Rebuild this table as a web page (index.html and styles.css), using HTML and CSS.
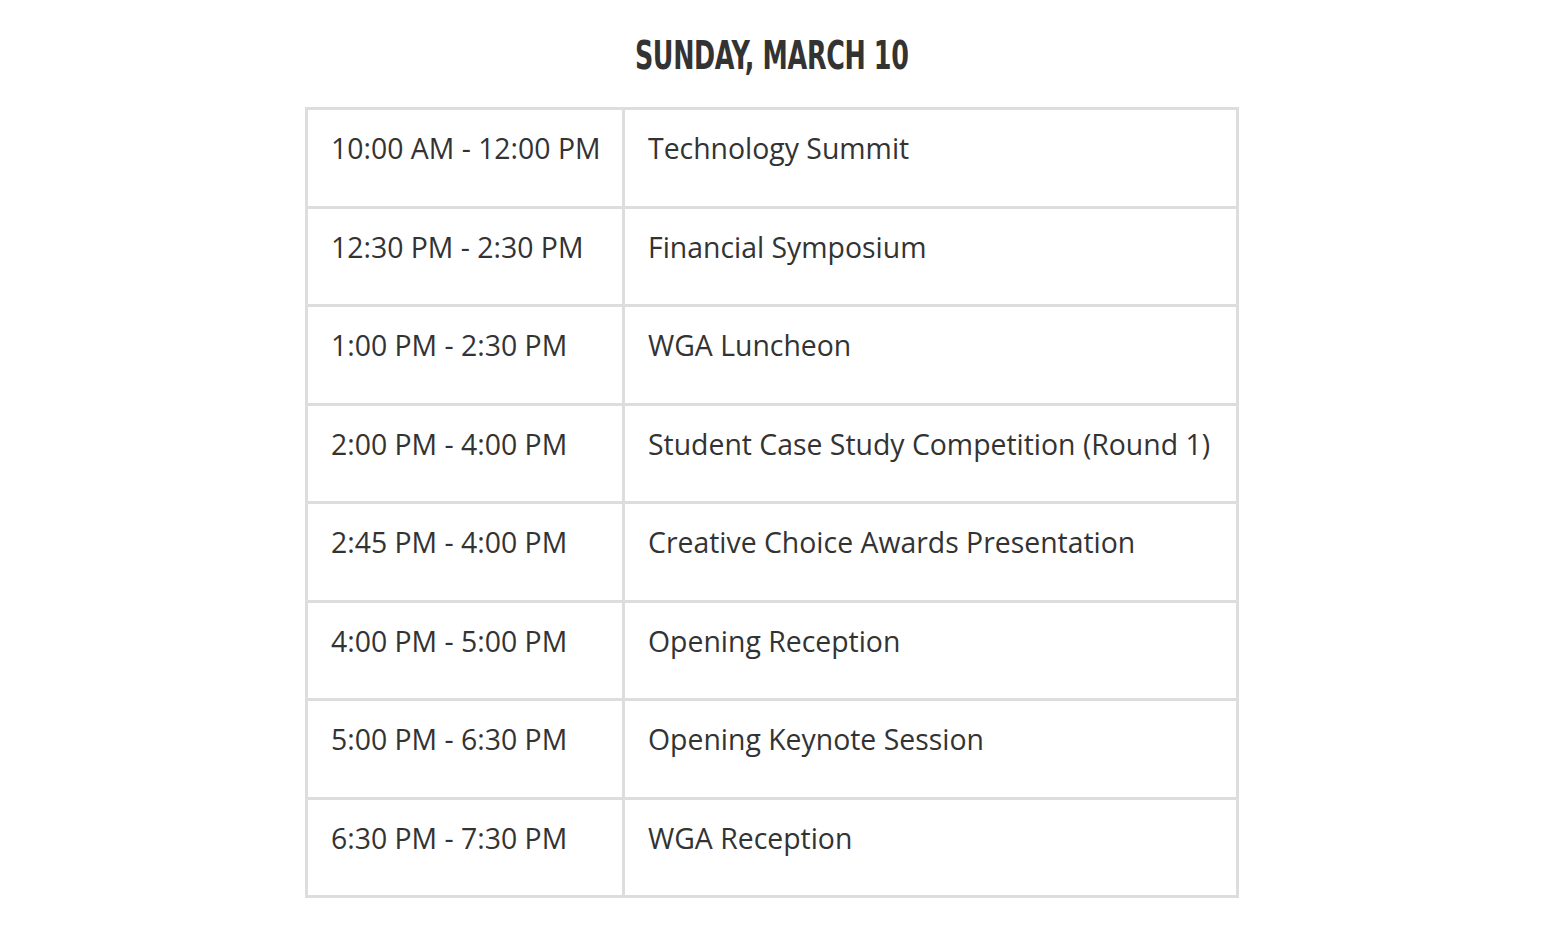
FILE: index.html
```html
<!DOCTYPE html>
<html>
<head>
<meta charset="utf-8">
<link rel="stylesheet" href="styles.css">
</head>
<body>
<main class="page">
  <h2 class="day"><span class="day-text">SUNDAY, MARCH 10</span></h2>
  <table class="schedule">
    <tr><td class="time">10:00 AM - 12:00 PM</td><td class="event">Technology Summit</td></tr>
    <tr><td class="time">12:30 PM - 2:30 PM</td><td class="event">Financial Symposium</td></tr>
    <tr><td class="time">1:00 PM - 2:30 PM</td><td class="event">WGA Luncheon</td></tr>
    <tr><td class="time">2:00 PM - 4:00 PM</td><td class="event">Student Case Study Competition (Round 1)</td></tr>
    <tr><td class="time">2:45 PM - 4:00 PM</td><td class="event">Creative Choice Awards Presentation</td></tr>
    <tr><td class="time">4:00 PM - 5:00 PM</td><td class="event">Opening Reception</td></tr>
    <tr><td class="time">5:00 PM - 6:30 PM</td><td class="event">Opening Keynote Session</td></tr>
    <tr><td class="time">6:30 PM - 7:30 PM</td><td class="event">WGA Reception</td></tr>
  </table>
</main>
</body>
</html>
```

FILE: styles.css
```css
html, body {
  margin: 0;
  padding: 0;
  background: #fff;
}
.page {
  display: flex;
  flex-direction: column;
  align-items: center;
  padding-top: 32px;
}
.day {
  margin: 0 0 28px 0;
  height: 47px;
  line-height: 47px;
  font-family: "DejaVu Sans", sans-serif;
  font-weight: bold;
  font-stretch: condensed;
  font-size: 39px;
  color: #333;
  white-space: nowrap;
}
.day-text {
  display: inline-block;
  transform: scaleX(0.725);
  letter-spacing: -0.5px;
}
.schedule {
  border-collapse: collapse;
  width: 934px;
  border: 3px solid #ddd;
}
.schedule td {
  border: 3px solid #ddd;
  height: 98.5px;
  box-sizing: border-box;
  vertical-align: top;
  padding: 18px 20px 0 23px;
  font-family: "Open Sans", sans-serif;
  font-size: 28.4px;
  line-height: 40px;
  color: #333;
  white-space: nowrap;
}
.schedule td.time {
  width: 317px;
}
```
